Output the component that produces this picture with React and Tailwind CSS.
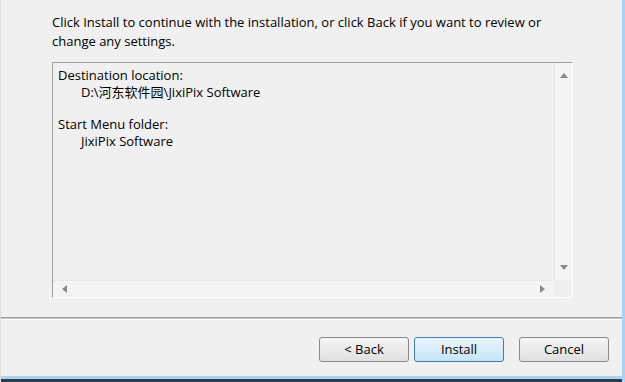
import React from 'react';

const font = { fontFamily: '"Open Sans", "Noto Sans CJK SC", sans-serif' };

function Arrow({ dir }) {
  const pts = {
    up: '0,6 4,1 8,6',
    down: '0,1 4,6 8,1',
    left: '6,0 1,4 6,8',
    right: '1,0 6,4 1,8',
  }[dir];
  const vert = dir === 'up' || dir === 'down';
  return (
    <svg className={vert ? 'w-[8px] h-[7px]' : 'w-[7px] h-[8px]'} viewBox={vert ? '0 0 8 7' : '0 0 7 8'}>
      <polygon points={pts} fill="#8a8a8a" />
    </svg>
  );
}

function Button({ children, primary }) {
  return (
    <button
      type="button"
      className={
        primary
          ? 'w-[90px] h-[25px] rounded-[3px] border border-[#3c7fb1] bg-gradient-to-b from-[#eaf6fd] to-[#c4e5f8] text-[13px] text-black'
          : 'w-[90px] h-[25px] rounded-[3px] border border-[#8a8a8a] bg-gradient-to-b from-[#f4f4f4] to-[#e0e0e0] text-[13px] text-black'
      }
      style={font}
    >
      {children}
    </button>
  );
}

export default function App() {
  return (
    <div
      className="w-[625px] h-[382px] bg-[#f0f0f0] flex flex-col border-r-[3px] border-r-[#a9d3f2] border-l border-l-[#dedede] text-[13px] text-black overflow-hidden"
      style={font}
    >
      <div className="flex-1 pl-[51px] pt-[13px]">
        <p className="leading-[19px]">
          Click Install to continue with the installation, or click Back if you want to review or
          <br />
          change any settings.
        </p>

        <div className="mt-[11px] w-[521px] h-[236px] border border-t-[#a0a0a0] border-l-[#a0a0a0] border-r-white border-b-white flex flex-col">
          <div className="flex flex-1 min-h-0">
            <div className="flex-1 pl-[5px] pt-[4px] leading-[17px]">
              <div>Destination location:</div>
              <div className="pl-[23px]">D:\河东软件园\JixiPix Software</div>
              <div className="h-[15px]" />
              <div>Start Menu folder:</div>
              <div className="pl-[23px]">JixiPix Software</div>
            </div>
            <div className="w-[18px] bg-[#f4f4f4] border-l border-dotted border-l-[#dcdcdc] flex flex-col items-center justify-between py-[9px]">
              <Arrow dir="up" />
              <Arrow dir="down" />
            </div>
          </div>
          <div className="flex h-[17px]">
            <div className="flex-1 bg-[#f4f4f4] border-t border-dotted border-t-[#dcdcdc] flex items-center justify-between px-[8px]">
              <Arrow dir="left" />
              <Arrow dir="right" />
            </div>
            <div className="w-[18px] bg-[#f0f0f0]" />
          </div>
        </div>
      </div>

      <div className="h-[1px] bg-[#a0a0a0]" />
      <div className="h-[1px] bg-[#c4c4c4]" />
      <div className="h-[1px] bg-white" />

      <div className="h-[56px] flex items-start justify-end pr-[13px] pt-[17px]">
        <div className="flex">
          <Button>&lt; Back</Button>
          <div className="w-[5px]" />
          <Button primary>Install</Button>
          <div className="w-[15px]" />
          <Button>Cancel</Button>
        </div>
      </div>

      <div className="h-[3px] bg-[#a9d3f2]" />
      <div className="h-[3px] bg-[#2f3e4e]" />
    </div>
  );
}
